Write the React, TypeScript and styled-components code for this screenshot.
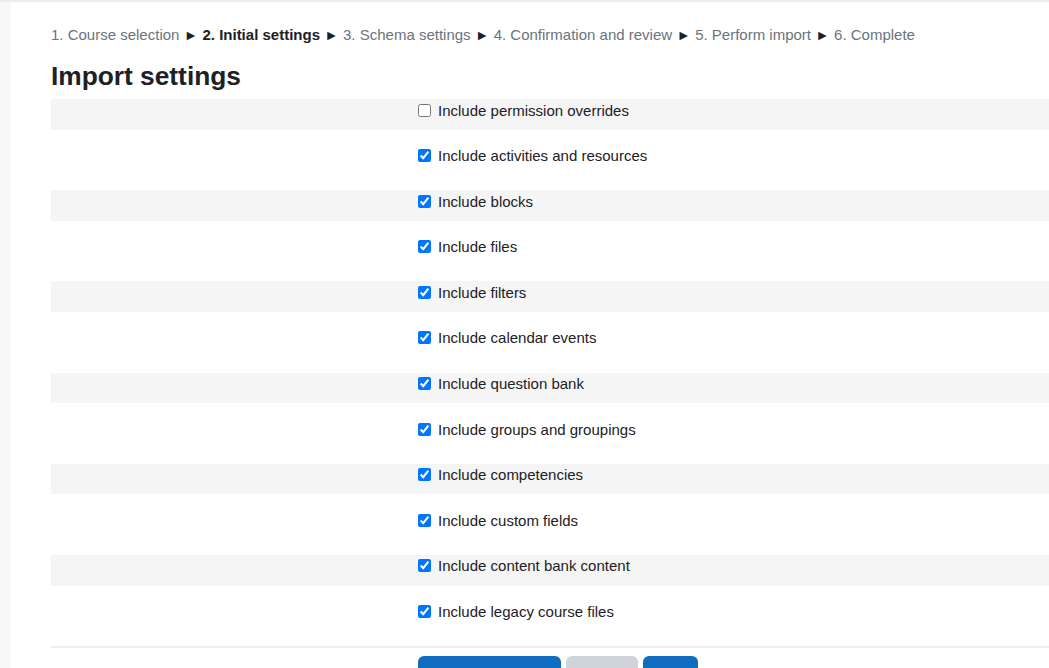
import React from 'react'
import styled, { createGlobalStyle } from 'styled-components';

const GlobalStyle = createGlobalStyle`
	html, body {
		margin: 0;
		padding: 0;
		background: #fff;
		font-family: "Liberation Sans", Arial, sans-serif;
		color: #1d2125;
	}
`;

const steps = [
	'1. Course selection',
	'2. Initial settings',
	'3. Schema settings',
	'4. Confirmation and review',
	'5. Perform import',
	'6. Complete',
];
const current = 1;

const options = [
	{ label: 'Include permission overrides', checked: false },
	{ label: 'Include activities and resources', checked: true },
	{ label: 'Include blocks', checked: true },
	{ label: 'Include files', checked: true },
	{ label: 'Include filters', checked: true },
	{ label: 'Include calendar events', checked: true },
	{ label: 'Include question bank', checked: true },
	{ label: 'Include groups and groupings', checked: true },
	{ label: 'Include competencies', checked: true },
	{ label: 'Include custom fields', checked: true },
	{ label: 'Include content bank content', checked: true },
	{ label: 'Include legacy course files', checked: true },
];

const App: React.FunctionComponent = () => {
	return (
		<>
			<GlobalStyle />
			<Page>
				<Drawer />
				<Main>
					<Steps>
						{steps.map((s, i) => (
							<React.Fragment key={s}>
								{i > 0 && <Arrow>►</Arrow>}
								<Step active={i === current}>{s}</Step>
							</React.Fragment>
						))}
					</Steps>
					<Heading>Import settings</Heading>
					<Form>
						{options.map((o, i) => (
							<Row key={o.label} striped={i % 2 === 0}>
								<LabelCol />
								<Field>
									<Check type="checkbox" defaultChecked={o.checked} />
									<span>{o.label}</span>
								</Field>
							</Row>
						))}
					</Form>
					<Actions>
						<LabelCol />
						<Buttons>
							<Button variant="primary" w={143} />
							<Button variant="secondary" w={72} />
							<Button variant="primary" w={55} />
						</Buttons>
					</Actions>
				</Main>
			</Page>
		</>
	);
}

const Page = styled.div`
	display: flex;
	border-top: 2px solid #ebedef;
	overflow: hidden;
	height: 666px;
`;

const Drawer = styled.div`
	width: 11px;
	flex-shrink: 0;
	background: #f7f8fa;
`;

const Main = styled.div`
	flex: 1;
	padding: 23px 0 0 40px;
	min-width: 0;
`;

const Steps = styled.div`
	display: flex;
	align-items: center;
	white-space: nowrap;
	font-size: 15px;
	line-height: 20px;
	height: 20px;
`;

const Step = styled.span<{ active?: boolean }>`
	color: ${p => (p.active ? '#1d2125' : '#6a737b')};
	font-weight: ${p => (p.active ? 700 : 400)};
`;

const Arrow = styled.span`
	color: #1d2125;
	font-size: 14px;
	margin: 0 4.6px;
`;

const Heading = styled.h2`
	margin: 15.5px 0 0;
	font-size: 26.3px;
	line-height: 31px;
	font-weight: 700;
	color: #1d2125;
`;

const Form = styled.div`
	margin-top: 7.5px;
	display: flex;
	flex-direction: column;
	gap: 15px;
	padding-bottom: 15px;
	border-bottom: 2px solid #eeeeee;
`;

const Row = styled.div<{ striped?: boolean }>`
	display: flex;
	height: 30.6px;
	background: ${p => (p.striped ? '#f5f5f5' : 'transparent')};
`;

const LabelCol = styled.div`
	width: 365px;
	flex-shrink: 0;
`;

const Field = styled.label`
	display: flex;
	align-items: center;
	gap: 7px;
	height: 22px;
	font-size: 15px;
	color: #1d2125;
	padding-left: 2px;
`;

const Check = styled.input`
	width: 13px;
	height: 13px;
	margin: 0;
`;

const Actions = styled.div`
	display: flex;
	padding-top: 8px;
`;

const Buttons = styled.div`
	display: flex;
	gap: 5px;
	padding-left: 2px;
`;

const Button = styled.div<{ variant: 'primary' | 'secondary'; w: number }>`
	width: ${p => p.w}px;
	height: 38px;
	border-radius: 6px;
	background: ${p => (p.variant === 'primary' ? '#0f6cbf' : '#ced4da')};
`;

export default App
